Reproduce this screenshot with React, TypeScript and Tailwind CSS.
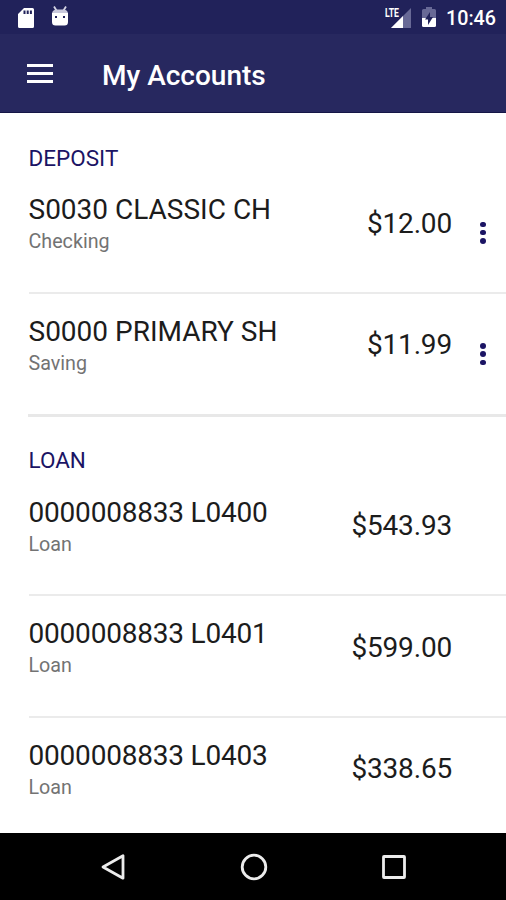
type Account = {
  name: string;
  type: string;
  balance: string;
  menu?: boolean;
};

const deposits: Account[] = [
  { name: "S0030 CLASSIC CH", type: "Checking", balance: "$12.00", menu: true },
  { name: "S0000 PRIMARY SH", type: "Saving", balance: "$11.99", menu: true },
];

const loans: Account[] = [
  { name: "0000008833 L0400", type: "Loan", balance: "$543.93" },
  { name: "0000008833 L0401", type: "Loan", balance: "$599.00" },
  { name: "0000008833 L0403", type: "Loan", balance: "$338.65" },
];

function StatusBar() {
  return (
    <div className="flex h-[34px] shrink-0 items-center bg-[#21225a] pl-[17px] pr-[10px] text-white">
      <svg className="mt-px h-[22px] w-[18px]" viewBox="0 0 18 22" fill="currentColor">
        <path
          fillRule="evenodd"
          d="M7 1h8.500q1.500 0 1.500 1.500v17q0 1.500-1.500 1.500h-13q-1.500 0-1.500-1.500V7zM6.500 3.500v3.500h2v-3.500zM9.700 3.500v3.500h2v-3.500zM12.900 3.500v3.500h2v-3.500z"
        />
      </svg>
      <svg className="mb-[2px] ml-[15px] h-[22px] w-[20px]" viewBox="0 0 20 22">
        <path d="M4 1.500l2.500 4M16 1.500l-2.500 4" stroke="#d5d5e4" strokeWidth="1.800" />
        <path d="M2 9q0-4.500 5-4.500h6q5 0 5 4.500z" fill="#c9c9dc" />
        <path
          fill="#fff"
          fillRule="evenodd"
          d="M2 8h16v9q0 3.500-3.500 3.500h-9Q2 20.500 2 17zM5 11v2h2v-2zM13 11v2h2v-2z"
        />
      </svg>
      <div className="flex-1" />
      <svg className="h-[24px] w-[26px]" viewBox="0 0 26 24">
        <path d="M26 3v20H6z" fill="#686996" />
        <path d="M18 11v12H6z" fill="#fff" />
        <text
          x="0"
          y="12"
          fill="#fff"
          fontFamily="Roboto, sans-serif"
          fontSize="12.500"
          fontWeight="700"
          textLength="14"
          lengthAdjust="spacingAndGlyphs"
          stroke="#21225a"
          strokeWidth="1.500"
          paintOrder="stroke"
        >
          LTE
        </text>
      </svg>
      <svg className="ml-[11px] h-[22px] w-[14px]" viewBox="0 0 14 22">
        <path d="M0 4.500Q0 3 1.500 3H4V1h6v2h2.500Q14 3 14 4.500V12H0z" fill="#686996" />
        <path d="M0 12h14v7.500q0 1.500-1.500 1.500h-11Q0 21 0 19.500z" fill="#fff" />
        <path d="M8 6v5h3l-5 8v-5.500H3z" fill="#21225a" />
      </svg>
      <span className="ml-[10px] pt-[3px] text-[19.700px] leading-none font-medium">10:46</span>
    </div>
  );
}

function AppBar() {
  return (
    <header className="flex h-[79px] shrink-0 items-center border-b border-[#151647] bg-[#27285f] pl-[27px] text-white">
      <button className="flex w-[26px] flex-col gap-[5px]" aria-label="Open menu">
        <span className="h-[3px] bg-white" />
        <span className="h-[3px] bg-white" />
        <span className="h-[3px] bg-white" />
      </button>
      <h1 className="ml-[49px] pt-[6px] text-[28px] leading-[32px] font-medium">My Accounts</h1>
    </header>
  );
}

function AccountRow({ account }: { account: Account }) {
  return (
    <div className="flex h-[121.600px] items-start">
      <div className="flex-1 pt-[21px]">
        <p
          className={
            account.menu
              ? "text-[28px] leading-[33px] text-[#1c1c1c]"
              : "text-[28px] leading-[33px] tracking-[-0.200px] text-[#1c1c1c]"
          }
        >
          {account.name}
        </p>
        <p className="mt-[4px] text-[19.700px] leading-[24px] text-[#737373]">{account.type}</p>
      </div>
      <p className="pt-[34.500px] text-[28px] leading-[33px] tracking-[-0.180px] text-[#1c1c1c]">{account.balance}</p>
      <div className="flex w-[54px] flex-col items-center gap-[2.700px] pt-[49.500px] pl-[8px]">
        {account.menu && (
          <>
            <span className="size-[5.600px] rounded-full bg-[#1b1464]" />
            <span className="size-[5.600px] rounded-full bg-[#1b1464]" />
            <span className="size-[5.600px] rounded-full bg-[#1b1464]" />
          </>
        )}
      </div>
    </div>
  );
}

function Section({ title, accounts }: { title: string; accounts: Account[] }) {
  return (
    <section className="pl-[28.500px]">
      <h2 className="h-[59px] pt-[31.600px] text-[22.500px] leading-[26px] text-[#1b1464]">{title}</h2>
      <div className="divide-y-2 divide-[#ebebeb]">
        {accounts.map((account) => (
          <AccountRow key={account.name} account={account} />
        ))}
      </div>
    </section>
  );
}

function NavBar() {
  return (
    <nav className="flex h-[67px] shrink-0 items-center justify-between bg-black pr-[98px] pl-[100px]">
      <svg className="size-[28px]" viewBox="0 0 28 28" fill="none" stroke="#ececec" strokeWidth="2.800">
        <path d="M23 2.800v22.400L3 14z" strokeLinejoin="round" />
      </svg>
      <svg className="size-[28px]" viewBox="0 0 28 28" fill="none" stroke="#ececec" strokeWidth="2.800">
        <circle cx="14" cy="14" r="11.800" />
      </svg>
      <svg className="size-[28px]" viewBox="0 0 28 28" fill="none" stroke="#ececec" strokeWidth="2.800">
        <rect x="3.500" y="3.500" width="21" height="21" rx="0.500" />
      </svg>
    </nav>
  );
}

export default function App() {
  return (
    <div className="flex h-[900px] w-[506px] flex-col overflow-hidden bg-white font-['Roboto',sans-serif]">
      <StatusBar />
      <AppBar />
      <main className="min-h-0 flex-1 overflow-hidden">
        <Section title="DEPOSIT" accounts={deposits} />
        <div className="-mt-px -mb-[1.500px] ml-[28px] h-[3px] bg-[#e8e8e8]" />
        <Section title="LOAN" accounts={loans} />
      </main>
      <NavBar />
    </div>
  );
}
